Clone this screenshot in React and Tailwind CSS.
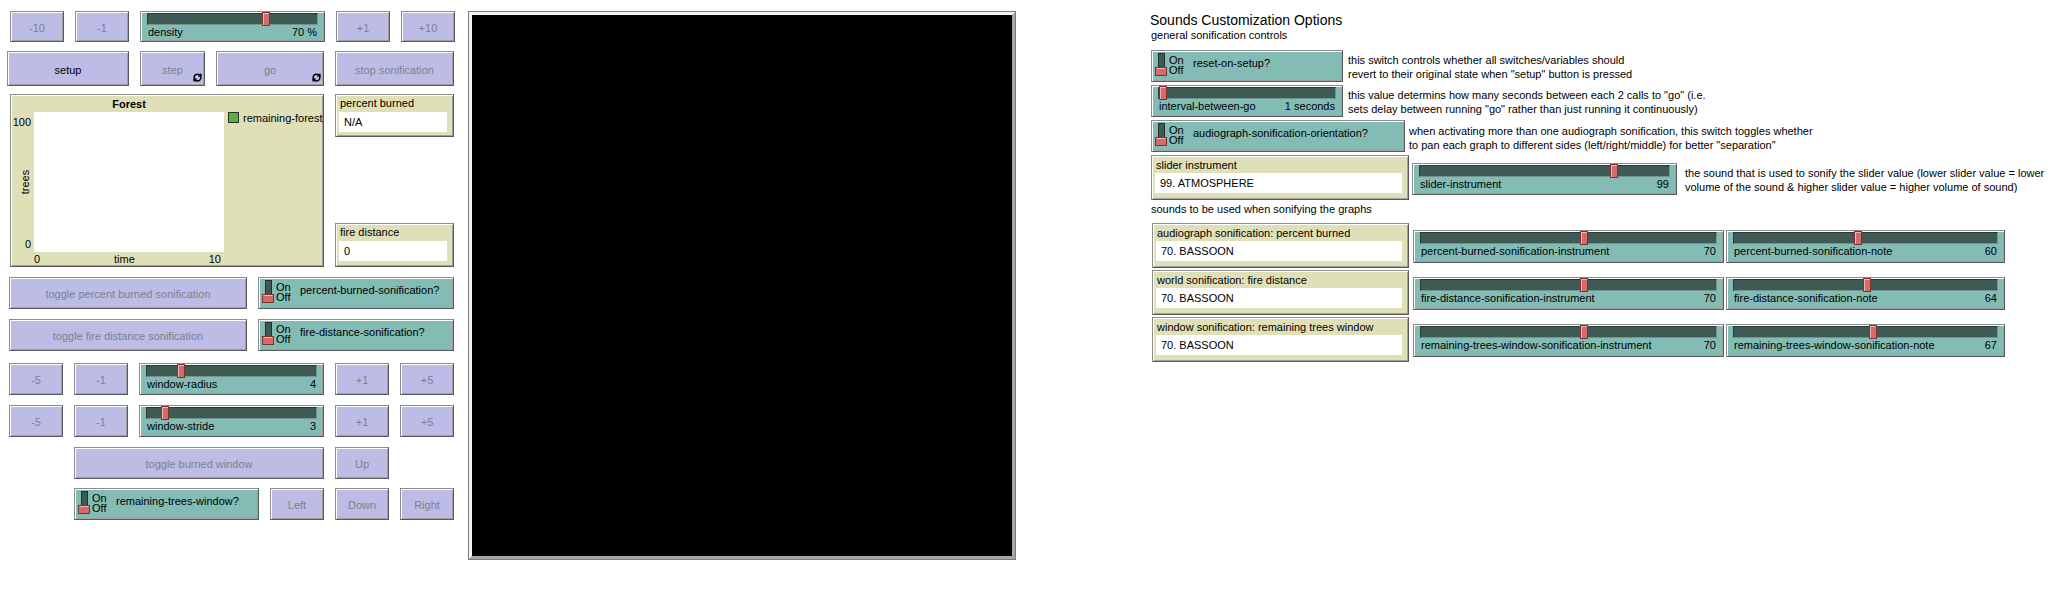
import { RefreshCw } from 'lucide-react'

const bevel =
  'border border-t-[#8c8c8c] border-l-[#8c8c8c] border-r-[#5a5a5a] border-b-[#5a5a5a] shadow-[inset_1px_1px_0_#ffffff,inset_-1px_-1px_0_#a0a0a0]'

const Button = ({ className, label, dark, forever }) => (
  <div
    className={`relative shrink-0 flex items-center justify-center pt-[3px] bg-[#bcbce6] ${bevel} ${
      dark ? 'text-black' : 'text-[#7f7f8f]'
    } ${className}`}
  >
    {label}
    {forever && (
      <RefreshCw className="absolute right-[2px] bottom-[3px] w-[9px] h-[9px] text-black" strokeWidth={4} />
    )}
  </div>
)

const Slider = ({ className, label, value, frac }) => (
  <div className={`shrink-0 flex flex-col bg-[#82bcb4] pt-[1px] ${bevel} ${className}`}>
    <div className="relative mx-[6px] h-[12px] bg-[#3f5955] border border-t-[#2a3a37] border-l-[#2a3a37] border-r-[#71958e] border-b-[#71958e]">
      <div
        className="absolute top-[-2px] h-[14px] w-[8px] bg-[#d66a6a] border border-[#7a3333] shadow-[inset_1px_1px_0_#f3b3b3]"
        style={{ left: `calc((100% - 8px) * ${frac})` }}
      />
    </div>
    <div className="flex justify-between px-[7px] mt-[1px] leading-[13px] whitespace-nowrap">
      <span>{label}</span>
      <span>{value}</span>
    </div>
  </div>
)

const Switch = ({ className, label }) => (
  <div className={`shrink-0 flex items-start bg-[#82bcb4] ${bevel} ${className}`}>
    <svg className="ml-[3px] mt-[2px] shrink-0" width="12" height="23" viewBox="0 0 12 23">
      <rect x="3.5" y="0.5" width="6" height="16" fill="#3f5955" stroke="#24302e" />
      <rect x="0.5" y="14.5" width="11" height="8" fill="#d66a6a" stroke="#7a3333" />
      <line x1="1.5" y1="15.5" x2="10.5" y2="15.5" stroke="#f3b3b3" />
    </svg>
    <div className="ml-[2px] mt-[4px] w-[24px] flex flex-col leading-[10px]">
      <span>On</span>
      <span>Off</span>
    </div>
    <span className="mt-[6px] leading-[13px] whitespace-nowrap">{label}</span>
  </div>
)

const Readout = ({ className, label, value, boxClass }) => (
  <div className={`shrink-0 flex flex-col bg-[#e0e0b8] pl-[3px] pr-[6px] ${bevel} ${className}`}>
    <div className="leading-[14px] pl-[1px] whitespace-nowrap">{label}</div>
    <div className={`bg-white h-[20px] flex items-center pl-[5px] ${boxClass}`}>{value}</div>
  </div>
)

const Plot = () => (
  <div className={`w-[314px] h-[173px] shrink-0 bg-[#e0e0b8] ${bevel} grid grid-cols-[23px_190px_1fr] grid-rows-[17px_140px_1fr]`}>
    <div />
    <div className="font-bold text-center leading-[13px] pt-[3px]">Forest</div>
    <div />
    <div className="relative flex flex-col justify-between items-end pr-[3px] pt-[4px] pb-[1px] leading-[13px]">
      <span>100</span>
      <span className="absolute left-[14px] top-1/2 -translate-x-1/2 -translate-y-1/2 -rotate-90">trees</span>
      <span>0</span>
    </div>
    <div className="bg-white" />
    <div className="flex items-start pl-[4px] leading-[13px]">
      <div className="w-[11px] h-[11px] bg-[#59b03c] border border-[#2f2f2f] shrink-0" />
      <span className="ml-[4px] whitespace-nowrap">remaining-forest</span>
    </div>
    <div />
    <div className="flex justify-between pr-[3px] leading-[13px] pt-[1px]">
      <span>0</span>
      <span>time</span>
      <span>10</span>
    </div>
    <div />
  </div>
)

const LeftPanel = () => (
  <div className="w-[454px] shrink-0 pt-[11px] flex flex-col">
    <div className="flex gap-[11px] pl-[10px] h-[31px]">
      <Button className="w-[54px]" label="-10" />
      <Button className="w-[54px]" label="-1" />
      <Slider className="w-[185px]" label="density" value="70 %" frac={0.71} />
      <Button className="w-[54px]" label="+1" />
      <Button className="w-[54px]" label="+10" />
    </div>
    <div className="flex gap-[11px] pl-[7px] h-[35px] mt-[9px]">
      <Button className="w-[122px]" label="setup" dark />
      <Button className="w-[65px]" label="step" forever />
      <Button className="w-[108px]" label="go" forever />
      <Button className="w-[119px]" label="stop sonification" />
    </div>
    <div className="flex gap-[11px] pl-[10px] mt-[8px]">
      <Plot />
      <div className="w-[119px] h-[173px] flex flex-col justify-between">
        <Readout className="h-[43px] pt-[1px]" boxClass="mt-[2px]" label="percent burned" value="N/A" />
        <Readout className="h-[44px] pt-[1px]" boxClass="mt-[2px]" label="fire distance" value="0" />
      </div>
    </div>
    <div className="flex gap-[11px] pl-[9px] h-[32px] mt-[10px]">
      <Button className="w-[238px]" label="toggle percent burned sonification" />
      <Switch className="w-[196px]" label="percent-burned-sonification?" />
    </div>
    <div className="flex gap-[11px] pl-[9px] h-[32px] mt-[10px]">
      <Button className="w-[238px]" label="toggle fire distance sonification" />
      <Switch className="w-[196px]" label="fire-distance-sonification?" />
    </div>
    <div className="flex gap-[11px] pl-[9px] h-[32px] mt-[12px]">
      <Button className="w-[54px]" label="-5" />
      <Button className="w-[54px]" label="-1" />
      <Slider className="w-[185px]" label="window-radius" value="4" frac={0.185} />
      <Button className="w-[54px]" label="+1" />
      <Button className="w-[54px]" label="+5" />
    </div>
    <div className="flex gap-[11px] pl-[9px] h-[32px] mt-[10px]">
      <Button className="w-[54px]" label="-5" />
      <Button className="w-[54px]" label="-1" />
      <Slider className="w-[185px]" label="window-stride" value="3" frac={0.086} />
      <Button className="w-[54px]" label="+1" />
      <Button className="w-[54px]" label="+5" />
    </div>
    <div className="flex gap-[11px] pl-[74px] h-[32px] mt-[10px]">
      <Button className="w-[250px]" label="toggle burned window" />
      <Button className="w-[54px]" label="Up" />
    </div>
    <div className="flex gap-[11px] pl-[74px] h-[32px] mt-[9px]">
      <Switch className="w-[185px]" label="remaining-trees-window?" />
      <Button className="w-[54px]" label="Left" />
      <Button className="w-[54px]" label="Down" />
      <Button className="w-[54px]" label="Right" />
    </div>
  </div>
)

const View = () => (
  <div className="ml-[14px] mt-[11px] w-[548px] h-[549px] shrink-0 border border-[#7a7a7a]">
    <div className="w-full h-full border-[3px] border-t-[#f4f4f4] border-l-[#f4f4f4] border-r-[#a6a6a6] border-b-[#a6a6a6] bg-black" />
  </div>
)

const soundRows = [
  {
    chooser: 'audiograph sonification: percent burned',
    inst: 'percent-burned-sonification-instrument',
    note: 'percent-burned-sonification-note',
    noteVal: 60,
    noteFrac: 0.47,
  },
  {
    chooser: 'world sonification: fire distance',
    inst: 'fire-distance-sonification-instrument',
    note: 'fire-distance-sonification-note',
    noteVal: 64,
    noteFrac: 0.505,
  },
  {
    chooser: 'window sonification: remaining trees window',
    inst: 'remaining-trees-window-sonification-instrument',
    note: 'remaining-trees-window-sonification-note',
    noteVal: 67,
    noteFrac: 0.528,
  },
]

const RightPanel = () => (
  <div className="ml-[134px] pt-[12px] flex flex-col">
    <div className="text-[14px] leading-[16px] whitespace-nowrap">Sounds Customization Options</div>
    <div className="leading-[14px] pl-[1px]">general sonification controls</div>

    <div className="flex mt-[8px] ml-[1px]">
      <Switch className="w-[192px] h-[32px]" label="reset-on-setup?" />
      <p className="ml-[5px] pt-[3px] leading-[14px] whitespace-nowrap">
        this switch controls whether all switches/variables should
        <br />
        revert to their original state when "setup" button is pressed
      </p>
    </div>

    <div className="flex mt-[3px] ml-[1px]">
      <Slider className="w-[192px] h-[32px]" label="interval-between-go" value="1 seconds" frac={0} />
      <p className="ml-[5px] pt-[3px] leading-[14px] whitespace-nowrap">
        this value determins how many seconds between each 2 calls to "go" (i.e.
        <br />
        sets delay between running "go" rather than just running it continuously)
      </p>
    </div>

    <div className="flex mt-[3px] ml-[1px]">
      <Switch className="w-[254px] h-[32px]" label="audiograph-sonification-orientation?" />
      <p className="ml-[4px] pt-[4px] leading-[14px] whitespace-nowrap">
        when activating more than one audiograph sonification, this switch toggles whether
        <br />
        to pan each graph to different sides (left/right/middle) for better "separation"
      </p>
    </div>

    <div className="flex items-start mt-[3px] ml-[1px]">
      <Readout className="w-[258px] h-[45px] pt-[2px]" boxClass="mt-[1px]" label="slider instrument" value="99. ATMOSPHERE" />
      <Slider className="ml-[3px] mt-[8px] w-[265px] h-[32px]" label="slider-instrument" value="99" frac={0.79} />
      <p className="ml-[8px] mt-[11px] leading-[14px] whitespace-nowrap">
        the sound that is used to sonify the slider value (lower slider value = lower
        <br />
        volume of the sound &amp; higher slider value = higher volume of sound)
      </p>
    </div>

    <div className="mt-[2px] ml-[1px] leading-[14px]">sounds to be used when sonifying the graphs</div>

    <div className="flex flex-col gap-[2px] mt-[7px] ml-[2px]">
      {soundRows.map((row) => (
        <div key={row.inst} className="flex items-start">
          <Readout className="w-[257px] h-[45px] pt-[2px]" boxClass="mt-[1px]" label={row.chooser} value="70. BASSOON" />
          <Slider className="ml-[4px] mt-[7px] w-[311px] h-[33px]" label={row.inst} value="70" frac={0.555} />
          <Slider className="ml-[2px] mt-[7px] w-[279px] h-[33px]" label={row.note} value={row.noteVal} frac={row.noteFrac} />
        </div>
      ))}
    </div>
  </div>
)

const App = () => (
  <div className="w-[2063px] h-[595px] overflow-hidden bg-white flex items-start text-black text-[11px] font-['Liberation_Sans',Arial,sans-serif]">
    <LeftPanel />
    <View />
    <RightPanel />
  </div>
)

export default App
